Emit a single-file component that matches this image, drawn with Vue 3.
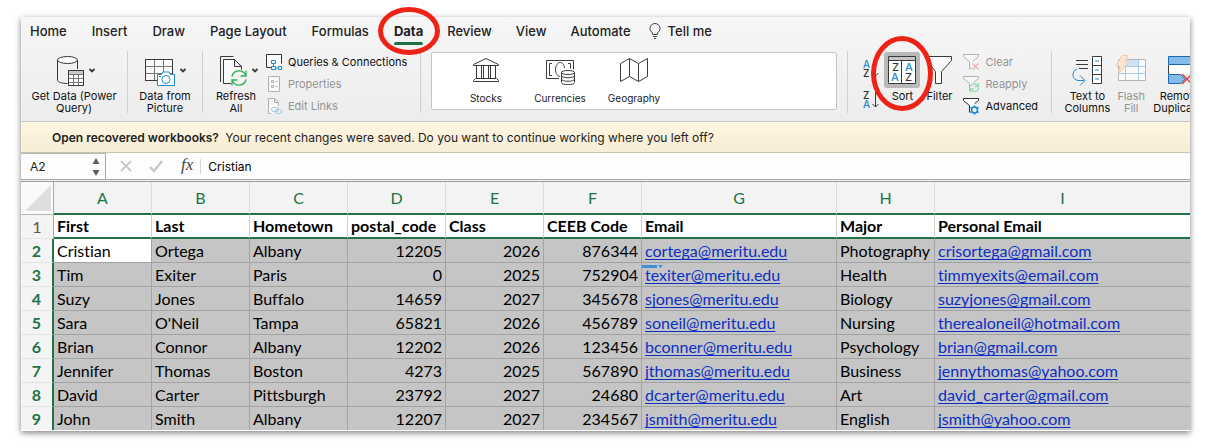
<script setup>
import { ref } from 'vue'

const tabsBefore = ['Home', 'Insert', 'Draw', 'Page Layout', 'Formulas']
const tabsAfter = ['Review', 'View', 'Automate']
const cellName = ref('A2')
const cellValue = ref('Cristian')
const columns = ['A', 'B', 'C', 'D', 'E', 'F', 'G', 'H', 'I']
const headings = ['First', 'Last', 'Hometown', 'postal_code', 'Class', 'CEEB Code', 'Email', 'Major', 'Personal Email']
const numeric = [3, 4, 5]
const links = [6, 8]
const rows = [
  ['Cristian', 'Ortega', 'Albany', '12205', '2026', '876344', 'cortega@meritu.edu', 'Photography', 'crisortega@gmail.com'],
  ['Tim', 'Exiter', 'Paris', '0', '2025', '752904', 'texiter@meritu.edu', 'Health', 'timmyexits@email.com'],
  ['Suzy', 'Jones', 'Buffalo', '14659', '2027', '345678', 'sjones@meritu.edu', 'Biology', 'suzyjones@gmail.com'],
  ['Sara', "O'Neil", 'Tampa', '65821', '2026', '456789', 'soneil@meritu.edu', 'Nursing', 'therealoneil@hotmail.com'],
  ['Brian', 'Connor', 'Albany', '12202', '2026', '123456', 'bconner@meritu.edu', 'Psychology', 'brian@gmail.com'],
  ['Jennifer', 'Thomas', 'Boston', '4273', '2025', '567890', 'jthomas@meritu.edu', 'Business', 'jennythomas@yahoo.com'],
  ['David', 'Carter', 'Pittsburgh', '23792', '2027', '24680', 'dcarter@meritu.edu', 'Art', 'david_carter@gmail.com'],
  ['John', 'Smith', 'Albany', '12207', '2027', '234567', 'jsmith@meritu.edu', 'English', 'jsmith@yahoo.com'],
]
</script>

<template>
  <main class="window">
    <nav class="tabs">
      <button v-for="t in tabsBefore" :key="t" class="tab">{{ t }}</button>
      <button class="tab active">Data<span class="ring ring-data"></span></button>
      <button v-for="t in tabsAfter" :key="t" class="tab after">{{ t }}</button>
      <button class="tab tell">
        <svg width="12" height="16" viewBox="0 0 12 16" fill="none" stroke="#444">
          <path d="M3.500 11.500V10C2 8.500 1 7.500 1 5.500a5 5 0 0 1 10 0c0 2-1 3-2.500 4.500v1.500zM4 13.500h4M5 15.500h2" />
        </svg>
        Tell me
      </button>
    </nav>

    <section class="ribbon">
      <div class="ribbon-row">
        <div class="group g-get">
          <button class="big">
            <svg width="46" height="32" viewBox="0 0 46 32" fill="none" stroke="#3a3a3a">
              <path d="M6.500 5v20c0 2 4 3.500 10 3.500M26.500 5v9" fill="none" />
              <ellipse cx="16.500" cy="5" rx="10" ry="3.500" fill="#fafafa" />
              <path d="M17.500 15.500h15v15h-15z" fill="#fff" />
              <path d="M18 16h14v3h-14z" fill="#c8c6c6" stroke="none" />
              <path d="M17.500 19.500h15M17.500 23.500h15M17.500 27.500h15M22.500 19v11M27.500 19v11" stroke="#777" />
              <path d="M17.500 15.500h15v15h-15z" />
              <path d="M38.500 14l2.500 2.500 2.500-2.500" stroke-width="1.800" />
            </svg>
            <span>Get Data (Power<br />Query)</span>
          </button>
        </div>
        <div class="group g-pic">
          <button class="big">
            <svg width="46" height="32" viewBox="0 0 46 32" fill="none" stroke="#3a3a3a">
              <path d="M3.500 4.500h27v21h-27z" fill="#fafafa" />
              <path d="M4 11.500h26M4 18.500h26M12.500 5v20M21.500 5v20" stroke="#777" />
              <path d="M3.500 4.500h27v21h-27z" />
              <path d="M15.500 19.500h4l1.500-2.500h6l1.500 2.500h4v11h-17z" fill="#fff" stroke="#1e8bcd" />
              <circle cx="24" cy="24.500" r="4" stroke="#1e8bcd" />
              <path d="M17 21.500h2" stroke="#1e8bcd" />
              <path d="M38.500 14l2.500 2.500 2.500-2.500" stroke-width="1.800" />
            </svg>
            <span>Data from<br />Picture</span>
          </button>
        </div>
        <div class="group g-refresh">
          <button class="big">
            <svg width="46" height="32" viewBox="0 0 46 32" fill="none" stroke="#3a3a3a">
              <path d="M7.500 27V1.500h13" />
              <path d="M18 28.500h-7.500v-24h11l7 7v3.500M21.500 4.500v7h7" fill="#fafafa" />
              <circle cx="26" cy="23" r="9" fill="#f1f1f1" stroke="none" />
              <path d="M19 21.500a7.200 7.200 0 0 1 13.500-1.500M33 24.500a7.200 7.200 0 0 1-13.500 1.500M33 15.500v5.500h-5.500M19 30.500v-5.500h5.500" stroke="#2fae58" stroke-width="1.300" />
              <path d="M39.500 14l2.500 2.500 2.500-2.500" stroke-width="1.800" />
            </svg>
            <span>Refresh<br />All</span>
          </button>
          <div class="stack">
            <button class="small">
              <svg width="18" height="18" viewBox="0 0 18 18" fill="none" stroke="#333">
                <path d="M6 14.500H1.500v-13h15v9" fill="#fafafa" />
                <path d="M6.500 7.500h4v3h-4zM6.500 13.500h4v3h-4zM13.500 13.500h3v3h-3zM8.500 10.500v3M10.500 15h3" stroke="#1e8bcd" />
              </svg>Queries &amp; Connections</button>
            <button class="small" disabled>
              <svg width="18" height="18" viewBox="0 0 18 18" fill="none" stroke="#b0b0b0">
                <path d="M3.500 1.500h11v15h-11z" fill="#f8f8f8" />
                <path d="M6.500 5.500h2v2h-2zM6.500 10.500h2v2h-2zM10.500 6.500h2M10.500 11.500h2" />
              </svg>Properties</button>
            <button class="small" disabled>
              <svg width="18" height="18" viewBox="0 0 18 18" fill="none" stroke="#b0b0b0">
                <path d="M6 16.500H3.500v-15h6l4 4V9M9.500 1.500v4h4" fill="#f8f8f8" />
                <rect x="6.500" y="10.500" width="7" height="4" rx="2" stroke="#9fcbe6" />
                <rect x="10.500" y="12.500" width="6" height="4" rx="2" stroke="#9fcbe6" />
              </svg>Edit Links</button>
          </div>
        </div>

        <div class="gallery">
          <button class="type">
            <svg width="30" height="28" viewBox="0 0 30 28" fill="none" stroke="#3a3a3a">
              <path d="M2.500 7.500L15 1.500l12.500 6v1h-25zM5.500 8.500v13M10.500 8.500v13M12.500 8.500v13M17.500 8.500v13M19.500 8.500v13M24.500 8.500v13M4.500 21.500h21l2 2v1h-25v-1z" />
            </svg>Stocks</button>
          <button class="type">
            <svg width="30" height="28" viewBox="0 0 30 28" fill="none" stroke="#3a3a3a">
              <path d="M14 21.500H1.500v-18h27v9M7 6.500H4.500v12H7M23 6.500h2.500v5" />
              <path d="M19.500 11c-.5-4-2.500-5.500-4.500-5.500s-4.500 3-4.500 7 2 7 4.500 7" />
              <path d="M17.500 15.500v10c0 3 13 3 13 0v-10" fill="#fff" transform="translate(-1 0)" />
              <ellipse cx="23" cy="15.500" rx="6.500" ry="2" fill="#fff" />
              <path d="M16.500 18.500c0 3 13 3 13 0M16.500 22c0 3 13 3 13 0" />
            </svg>Currencies</button>
          <button class="type">
            <svg width="30" height="28" viewBox="0 0 30 28" fill="none" stroke="#3a3a3a">
              <path d="M1.500 6.500l9-5 9 5 9-5v18l-9 5-9-5-9 5zM10.500 1.500v18M19.500 6.500v18" />
            </svg>Geography</button>
        </div>

        <div class="group g-sort">
          <div class="az">
            <button aria-label="Sort ascending">
              <svg width="20" height="20" viewBox="0 0 20 20" fill="none">
                <text x="1" y="9" class="glyph blue">A</text><text x="1" y="18" class="glyph">Z</text>
                <path d="M13.500 2v15M10.500 14l3 3 3-3" stroke="#3a3a3a" />
              </svg>
            </button>
            <button aria-label="Sort descending">
              <svg width="20" height="20" viewBox="0 0 20 20" fill="none">
                <text x="1" y="9" class="glyph">Z</text><text x="1" y="18" class="glyph blue">A</text>
                <path d="M13.500 2v15M10.500 14l3 3 3-3" stroke="#3a3a3a" />
              </svg>
            </button>
          </div>
          <button class="big sort">
            <span class="pressed">
              <svg width="28" height="28" viewBox="0 0 28 28" fill="none" stroke="#3a3a3a">
                <path d="M.5.5h27v27H.500z" fill="#fff" />
                <path d="M1 1h26v3H1z" fill="#c8c6c6" stroke="none" />
                <path d="M.5 4.500h27M13.500 5v22" />
                <text x="4" y="15" class="glyph mid">Z</text><text x="3" y="25" class="glyph mid blue">A</text>
                <text x="17" y="15" class="glyph mid blue">A</text><text x="17" y="25" class="glyph mid">Z</text>
              </svg>
            </span>
            <span>Sort</span>
            <span class="ring ring-sort"></span>
          </button>
          <button class="big filter">
            <svg width="28" height="32" viewBox="0 0 28 32" fill="#fafafa" stroke="#3a3a3a">
              <path d="M1.500 1.500h25v4l-10 11v12h-6v-12l-9-11z" />
            </svg>
            <span>Filter</span>
          </button>
          <div class="stack">
            <button class="small" disabled>
              <svg width="18" height="18" viewBox="0 0 18 18" fill="none" stroke="#b0b0b0">
                <path d="M9.500 15.500h-2V8.500l-6-5v-2h15v2l-6 5" fill="#f8f8f8" />
                <path d="M10.500 10.500l6 6M16.500 10.500l-6 6" stroke="#efb0b0" stroke-width="1.300" />
              </svg>Clear</button>
            <button class="small" disabled>
              <svg width="18" height="18" viewBox="0 0 18 18" fill="none" stroke="#b0b0b0">
                <path d="M8.500 15.500h-1V8.500l-6-5v-2h15v2l-5 4" fill="#f8f8f8" />
                <path d="M8.500 12a4 4 0 0 1 7.500-1M16.500 13a4 4 0 0 1-7.500 1.500M16.500 8v3.500H13M8.500 17.500v-3.500H12" stroke="#9ed8af" stroke-width="1.300" />
              </svg>Reapply</button>
            <button class="small">
              <svg width="18" height="18" viewBox="0 0 18 18" fill="none" stroke="#333">
                <path d="M7.500 15.500V8.500l-6-5v-2h15v2l-4 3" fill="#fafafa" />
                <circle cx="12.500" cy="13" r="3" stroke="#1e8bcd" stroke-width="1.500" />
                <path d="M12.500 8.500v2M12.500 15.500v2M8.500 10.500l2 1M14.500 14.500l2 1M8.500 15.500l2-1M14.500 11.500l2-1" stroke="#1e8bcd" stroke-width="1.500" />
              </svg><span class="dark">Advanced</span></button>
          </div>
        </div>

        <div class="group g-tools">
          <button class="big">
            <svg width="32" height="32" viewBox="0 0 32 32" fill="none" stroke="#3a3a3a">
              <path d="M5 5.500h12M5 9.500h12M8 13.500h9" />
              <path d="M21.500 1.500h9v27h-9zM21.500 10.500h9M21.500 19.500h9" fill="#fff" />
              <path d="M24 6h4M24 15h4M24 24h4" stroke="#1e8bcd" />
              <path d="M6 14c-6 2-5 11 1 11.500h6M9 20.500l5 5-5 5" stroke="#1e8bcd" />
            </svg>
            <span>Text to<br />Columns</span>
          </button>
          <button class="big flash" disabled>
            <svg width="32" height="32" viewBox="0 0 32 32" fill="none" stroke="#b5b5b5">
              <path d="M3.500 4.500h27v21h-27z" fill="#fafafa" />
              <path d="M10.500 5h13v6h-13z" fill="#cfe3f3" stroke="none" />
              <path d="M4 11.500h26M4 18.500h26M10.500 5v20M23.500 5v20" stroke="#a9cbe4" />
              <path d="M7 .5h6L10 7h4L3 19l2-8H1z" fill="#fbe5d2" stroke="#f1c9a8" />
            </svg>
            <span>Flash<br />Fill</span>
          </button>
          <button class="big">
            <svg width="32" height="32" viewBox="0 0 32 32" fill="none" stroke="#1b68ae">
              <path d="M4 10h25v9H4z" fill="#fff" stroke="none" />
              <path d="M3.500 10v9M29.500 10v9" stroke="#3a3a3a" />
              <path d="M3.500 1.500h26v8h-26z" fill="#84bce9" />
              <path d="M3.500 19.500h12l5 4.500-5 4.500h-12z" fill="#84bce9" />
              <path d="M17 19l10 10M27 19L17 29" stroke="#e84545" stroke-width="1.500" />
            </svg>
            <span>Remove<br />Duplicates</span>
          </button>
        </div>
      </div>
    </section>

    <section class="banner"><strong>Open recovered workbooks?</strong> Your recent changes were saved. Do you want to continue working where you left off?</section>

    <section class="formula">
      <div class="namebox">
        <input v-model="cellName" aria-label="Cell name" />
        <svg width="8" height="20" viewBox="0 0 8 20" fill="#5a5a5a"><path d="M4 1l3.500 6h-7zM4 19l3.500-6h-7z" /></svg>
      </div>
      <button aria-label="Cancel"><svg width="14" height="14" viewBox="0 0 14 14" stroke="#c9c9c9" stroke-width="2"><path d="M2 2l10 10M12 2L2 12" /></svg></button>
      <button aria-label="Enter"><svg width="16" height="14" viewBox="0 0 16 14" fill="none" stroke="#c9c9c9" stroke-width="2.500"><path d="M2 8l4 4 8-10" /></svg></button>
      <button class="fx">fx</button>
      <input v-model="cellValue" class="value" aria-label="Cell contents" />
    </section>

    <table class="sheet">
      <colgroup>
        <col class="c-num" />
        <col v-for="c in columns" :key="c" :class="'c-' + c" />
      </colgroup>
      <thead>
        <tr>
          <th class="corner"><svg width="26" height="26" viewBox="0 0 26 26"><path d="M26 0v26H0z" fill="#dedede" /></svg></th>
          <th v-for="c in columns" :key="c">{{ c }}</th>
        </tr>
      </thead>
      <tbody>
        <tr class="titles">
          <th class="num">1</th>
          <td v-for="h in headings" :key="h">{{ h }}</td>
        </tr>
        <tr v-for="(r, i) in rows" :key="i" class="picked">
          <th class="num">{{ i + 2 }}</th>
          <td v-for="(v, j) in r" :key="j" :class="{ right: numeric.includes(j), current: i === 0 && j === 0 }">
            <a v-if="links.includes(j)" :href="'mailto:' + v">{{ v }}</a>
            <template v-else>{{ v }}</template>
            <svg v-if="i === 1 && j === 6" class="mark" width="22" height="4" viewBox="0 0 22 4" fill="#3f8fd8"><path d="M0 0h15v3H0zM16 0h5l-2.500 3z" /></svg>
          </td>
        </tr>
      </tbody>
    </table>
  </main>
</template>

<style>
body { margin: 0; background: #fff; }
</style>

<style scoped>
* { box-sizing: border-box; }
.window {
  margin: 17px 21px 16px;
  font-family: Inter, "Liberation Sans", sans-serif;
  font-size: 12px;
  color: #222;
  box-shadow: 0 2px 6px rgba(0, 0, 0, 0.5);
  background: linear-gradient(#f6f6f6, #ededed 104px);
}
button { border: 0; padding: 0; margin: 0; background: none; font: inherit; color: inherit; white-space: nowrap; }
svg { display: block; flex: none; }
.tabs { display: flex; gap: 25px; height: 34px; padding-left: 9px; font-size: 13px; font-weight: 500; line-height: 20px; }
.tab { height: 28px; position: relative; }
.active { font-weight: 700; }
.active::after { content: ""; position: absolute; left: 0; right: 0; bottom: 0; height: 3px; border-radius: 2px; background: #217346; }
.after { margin-left: -1px; }
.tell { display: flex; align-items: center; gap: 7px; margin-left: -7px; }
.ring { position: absolute; z-index: 2; border: 5px solid #ee2318; border-radius: 50%; pointer-events: none; }
.ring-data { left: 50%; top: 50%; width: 62px; height: 48px; margin: -24px -31px; }
.ring-sort { left: 50%; top: -15px; width: 62px; height: 75px; margin-left: -31px; }
.ribbon { overflow-x: clip; border-bottom: 1px solid #c6c6c6; }
.ribbon-row { display: flex; width: calc(100% + 18px); height: 70px; }
.group { display: flex; flex: none; height: 62px; border-right: 1px solid #cfcfcf; }
.big { position: relative; display: flex; flex-direction: column; align-items: center; gap: 3px; padding-top: 4px; font-size: 11px; line-height: 12px; text-align: center; color: #111; }
.g-get { width: 107px; justify-content: center; }
.g-pic { width: 75px; justify-content: center; }
.g-refresh { width: 218px; padding-left: 10px; gap: 6px; }
.stack { display: flex; flex-direction: column; }
.small { display: flex; flex: none; align-items: center; gap: 5px; height: 22px; font-size: 11px; line-height: 14px; color: #111; }
button:disabled { color: #949494; }
.gallery { flex: 1; display: flex; height: 58px; margin: 1px 10px 0; padding: 4px 17px; border: 1px solid #c4c4c4; border-radius: 2px; background: #fff; }
.type { width: 74px; display: flex; flex-direction: column; align-items: center; gap: 7px; font-size: 10px; line-height: 12px; }
.g-sort { width: 205px; border-left: 1px solid #cfcfcf; padding-left: 14px; }
.az { width: 22px; display: flex; flex-direction: column; gap: 11px; padding-top: 8px; }
.glyph { font: 500 10px Inter, sans-serif; fill: #333; stroke: none; }
.blue { fill: #1e8bcd; }
.mid { font-size: 11px; }
.sort { padding-top: 1px; gap: 2px; }
.pressed { padding: 4px; border-radius: 3px; background: #b9b9b9; }
.filter { margin: 0 9px 0 5px; }
.g-tools { border: 0; padding-left: 12px; }
.flash { width: 28px; margin: 0 8px 0 7px; }
.banner { height: 31px; padding-left: 31px; border-bottom: 1px solid #c9c3ae; background: linear-gradient(#fff6e2, #f8edd5); line-height: 31px; white-space: nowrap; overflow: hidden; }
.banner strong { margin-right: 3px; font-weight: 600; }
.formula { display: flex; align-items: center; height: 27px; background: #fdfdfd; border-bottom: 1px solid #a9a9a9; }
.namebox { display: flex; align-items: center; justify-content: space-between; width: 85px; height: 26px; padding: 0 5px 0 9px; margin-right: 13px; border-top: 1px solid #b5b5b5; border-right: 1px solid #a9a9a9; }
input { min-width: 0; border: 0; padding: 0; background: none; outline: 0; color: #222; font: inherit; }
.namebox input { width: 50px; }
.formula button { margin-right: 15px; }
.formula .fx { margin-right: 7px; padding: 0 0 2px 2px; font: italic 17px/20px "Liberation Serif", serif; color: #444; }
.value { flex: 1; border-left: 1px solid #d5d5d5; padding-left: 7px; color: #000; }
.sheet { width: 100%; margin-top: 1px; table-layout: fixed; border-collapse: separate; border-spacing: 0; border-top: 1px solid #a0a0a0; border-bottom: 1px solid #fff; font-family: Lato, "Liberation Sans", sans-serif; font-size: 16px; font-variant-ligatures: none; line-height: 22px; color: #000; background: #fff; }
.c-num { width: 33px; }
.c-A, .c-B, .c-C, .c-D, .c-E, .c-F, .c-H { width: 98px; }
.c-G { width: 195px; }
th, td { padding: 0 3px; overflow: hidden; white-space: nowrap; text-align: left; }
thead th { height: 33px; background: #f3f3f3; border-right: 1px solid #dcdcdc; border-bottom: 2px solid #217346; color: #217346; font-weight: 400; text-align: center; }
thead .corner { padding: 0 2px 0 4px; border-right-color: #a9a9a9; border-bottom: 1px solid #b5b5b5; background: #fafafa; }
.num { background: #f4f4f4; border-right: 1px solid #a9a9a9; border-bottom: 1px solid #e4e4e4; color: #555; font-weight: 400; text-align: center; }
tbody tr { height: 24px; }
td { border-right: 1px solid #a3a3a3; border-bottom: 1px solid #a3a3a3; }
td:last-child, thead th:last-child { border-right: 0; }
.titles td { border-right-color: #cfcfcf; border-bottom: 2px solid #217346; font-weight: 700; }
.picked td { position: relative; background: #c5c5c5; }
.picked td.current { background: #fff; }
.picked .num { border-right: 2px solid #217346; color: #217346; font-weight: 700; }
td.right { text-align: right; }
a { color: #0c2fc4; text-decoration: underline; text-decoration-skip-ink: none; text-underline-offset: 2px; }
.mark { position: absolute; left: 0; top: 2px; }
.sheet tbody tr:last-child td, .sheet tbody tr:last-child th { border-bottom: 0; }
.sheet tbody tr:last-child { height: 23px; }
</style>
